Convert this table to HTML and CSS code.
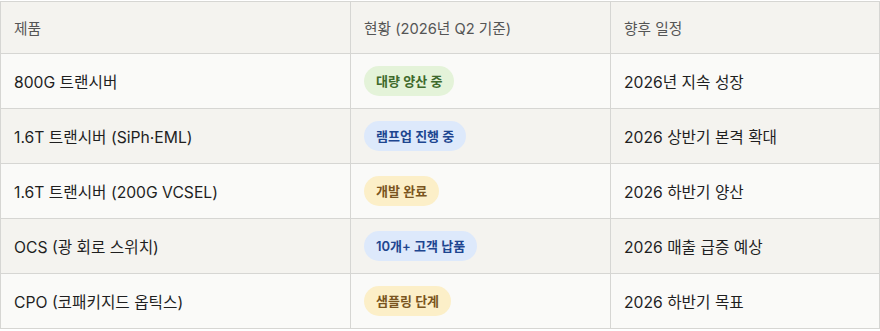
FILE: index.html
```html
<!DOCTYPE html>
<html lang="ko">
<head>
<meta charset="utf-8">
<link rel="stylesheet" href="styles.css">
</head>
<body>
<table class="roadmap">
  <thead>
    <tr>
      <th class="col-product">제품</th>
      <th class="col-status">현황 (2026년 Q2 기준)</th>
      <th class="col-plan">향후 일정</th>
    </tr>
  </thead>
  <tbody>
    <tr>
      <td>800G 트랜시버</td>
      <td><span class="badge badge-green">대량 양산 중</span></td>
      <td>2026년 지속 성장</td>
    </tr>
    <tr>
      <td>1.6T 트랜시버 (SiPh·EML)</td>
      <td><span class="badge badge-blue">램프업 진행 중</span></td>
      <td>2026 상반기 본격 확대</td>
    </tr>
    <tr>
      <td>1.6T 트랜시버 (200G VCSEL)</td>
      <td><span class="badge badge-yellow">개발 완료</span></td>
      <td>2026 하반기 양산</td>
    </tr>
    <tr>
      <td>OCS (광 회로 스위치)</td>
      <td><span class="badge badge-blue">10개+ 고객 납품</span></td>
      <td>2026 매출 급증 예상</td>
    </tr>
    <tr>
      <td>CPO (코패키지드 옵틱스)</td>
      <td><span class="badge badge-yellow">샘플링 단계</span></td>
      <td>2026 하반기 목표</td>
    </tr>
  </tbody>
</table>
</body>
</html>
```

FILE: styles.css
```css
html, body {
  margin: 0;
  padding: 0;
  background: #ffffff;
}
body {
  padding-top: 1px;
  font-family: Inter, "Noto Sans CJK KR", sans-serif;
  color: #1f1f1f;
}
.roadmap {
  width: 880px;
  border-collapse: collapse;
  border: 1px solid #d6d6d3;
  table-layout: fixed;
}
.col-product { width: 350px; }
.col-status { width: 260px; }
.roadmap th {
  background: #f4f3ef;
  font-size: 14.7px;
  font-weight: 400;
  color: #555555;
  text-align: left;
  height: 52px;
  padding: 0 13px;
  border: 1px solid #d6d6d3;
  box-sizing: border-box;
}
.roadmap td {
  font-size: 15.7px;
  color: #1f1f1f;
  height: 55px;
  padding: 0 13px;
  border: 1px solid #d6d6d3;
  box-sizing: border-box;
  background: #fafaf8;
}
.roadmap tbody tr:nth-child(even) td {
  background: #f4f3ef;
}
.badge {
  display: inline-block;
  height: 30px;
  line-height: 30px;
  padding: 0 12px;
  border-radius: 15px;
  font-size: 13px;
  font-weight: 600;
}
.badge-green { background: #e4f3d9; color: #3e6a2c; }
.badge-blue { background: #dde9fb; color: #1e4690; }
.badge-yellow { background: #fcefc8; color: #7a5520; }
```
